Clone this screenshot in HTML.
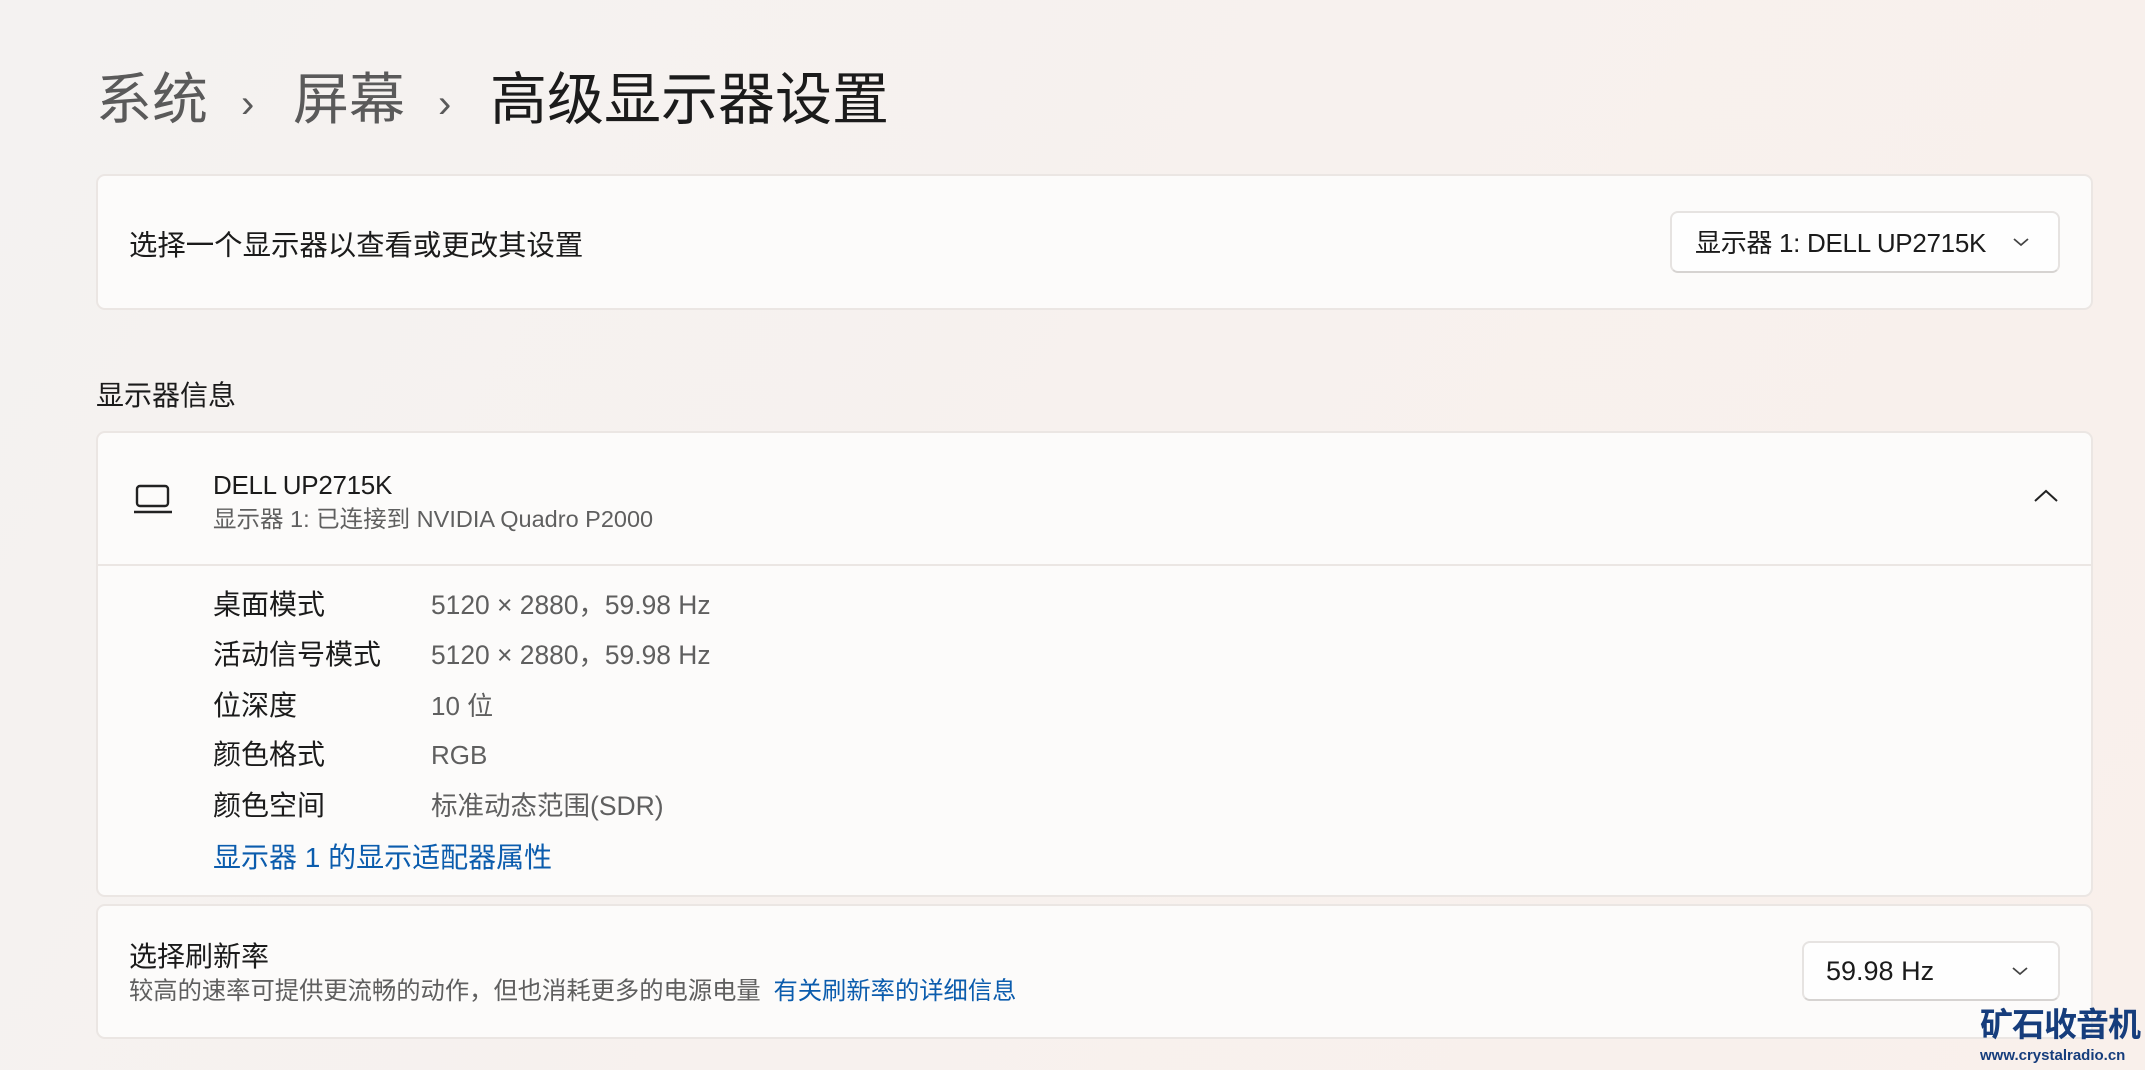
<!DOCTYPE html>
<html><head><meta charset="utf-8"><style>
*{margin:0;padding:0;box-sizing:border-box}
body{width:2145px;height:1070px;overflow:hidden;background:linear-gradient(120deg,#f4f2f1 0%,#f7f1ee 50%,#f9f0eb 100%);font-family:"Liberation Sans","Noto Sans CJK SC",sans-serif;color:#1b1b1b;position:relative}
.a{position:absolute;white-space:nowrap}
.card{position:absolute;left:96px;width:1997px;background:#fcfbfa;border:2px solid #ebe6e3;border-radius:9px}
.dd{position:absolute;background:#fefefe;border:2px solid #e6e3e1;border-bottom-color:#d6d3d1;border-radius:8px}
.v{color:#5f5f5f}
.lk{color:#0b5cad}
</style></head><body>
<div class="a" style="left:96px;top:62px;font-size:56px;line-height:76px;color:#5a5a5a">系统</div>
<div class="a" style="left:241px;top:66px;font-size:40px;line-height:76px;color:#5a5a5a">›</div>
<div class="a" style="left:293px;top:62px;font-size:56px;line-height:76px;color:#5a5a5a">屏幕</div>
<div class="a" style="left:438px;top:66px;font-size:40px;line-height:76px;color:#5a5a5a">›</div>
<div class="a" style="left:490px;top:62px;font-size:57px;line-height:76px;color:#1b1b1b">高级显示器设置</div>

<div class="card" style="top:174px;height:136px"></div>
<div class="a" style="left:129px;top:226px;font-size:28.4px;line-height:40px">选择一个显示器以查看或更改其设置</div>
<div class="dd" style="left:1670px;top:211px;width:390px;height:62px"></div>
<div class="a" style="left:1695px;top:223px;font-size:26px;line-height:40px;letter-spacing:-0.3px">显示器 1: DELL UP2715K</div>
<svg class="a" style="left:2011px;top:235px" width="20" height="14" viewBox="0 0 20 14"><path d="M3 4 L10 10 L17 4" fill="none" stroke="#444" stroke-width="1.8"/></svg>

<div class="a" style="left:96px;top:376px;font-size:28px;line-height:40px">显示器信息</div>

<div class="card" style="top:431px;height:466px"></div>
<div class="a" style="left:97px;top:564px;width:1995px;height:2px;background:#ebe6e3"></div>
<svg class="a" style="left:132px;top:484px" width="42" height="32" viewBox="0 0 42 32"><rect x="5" y="2" width="31" height="20" rx="3" fill="none" stroke="#222" stroke-width="2.4"/><path d="M2 28 H40" stroke="#222" stroke-width="2.6"/></svg>
<div class="a" style="left:213px;top:467px;font-size:26px;line-height:36px;letter-spacing:-0.3px">DELL UP2715K</div>
<div class="a" style="left:213px;top:503px;font-size:23.5px;line-height:32px;color:#5f5f5f">显示器 1: 已连接到 NVIDIA Quadro P2000</div>
<svg class="a" style="left:2033px;top:488px" width="26" height="16" viewBox="0 0 26 16"><path d="M2 13 L13 3 L24 13" fill="none" stroke="#222" stroke-width="2"/></svg>

<div class="a" style="left:213px;top:586px;font-size:28px;line-height:38px">桌面模式</div>
<div class="a v" style="left:431px;top:586px;font-size:26.4px;line-height:38px">5120 × 2880，59.98 Hz</div>
<div class="a" style="left:213px;top:636px;font-size:28px;line-height:38px">活动信号模式</div>
<div class="a v" style="left:431px;top:636px;font-size:26.4px;line-height:38px">5120 × 2880，59.98 Hz</div>
<div class="a" style="left:213px;top:687px;font-size:28px;line-height:38px">位深度</div>
<div class="a v" style="left:431px;top:687px;font-size:26px;line-height:38px">10 位</div>
<div class="a" style="left:213px;top:736px;font-size:28px;line-height:38px">颜色格式</div>
<div class="a v" style="left:431px;top:736px;font-size:26px;line-height:38px">RGB</div>
<div class="a" style="left:213px;top:787px;font-size:28px;line-height:38px">颜色空间</div>
<div class="a v" style="left:431px;top:787px;font-size:26.5px;line-height:38px">标准动态范围(SDR)</div>
<div class="a lk" style="left:213px;top:839px;font-size:28px;line-height:38px">显示器 1 的显示适配器属性</div>

<div class="card" style="top:904px;height:135px"></div>
<div class="a" style="left:129px;top:938px;font-size:28px;line-height:38px">选择刷新率</div>
<div class="a" style="left:129px;top:976px;font-size:24.3px;line-height:32px;color:#5f5f5f">较高的速率可提供更流畅的动作，但也消耗更多的电源电量 <span class="lk" style="margin-left:6px">有关刷新率的详细信息</span></div>
<div class="dd" style="left:1802px;top:941px;width:258px;height:60px"></div>
<div class="a" style="left:1826px;top:952px;font-size:27px;line-height:38px">59.98 Hz</div>
<svg class="a" style="left:2010px;top:964px" width="20" height="14" viewBox="0 0 20 14"><path d="M3 4 L10 10 L17 4" fill="none" stroke="#444" stroke-width="1.8"/></svg>

<div class="a" style="left:1980px;top:1006px;font-size:33px;line-height:38px;font-weight:bold;color:#163d7c;letter-spacing:-1px">矿石收音机</div>
<div class="a" style="left:1980px;top:1046px;font-size:15px;line-height:20px;font-weight:bold;color:#163d7c">www.crystalradio.cn</div>
</body></html>
